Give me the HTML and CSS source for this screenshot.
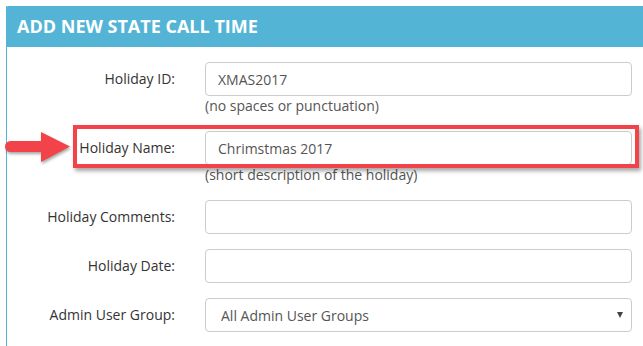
FILE: index.html
```html
<!DOCTYPE html>
<html>
<head>
  <meta charset="UTF-8">
  <title>Add New State Call Time</title>
  <link rel="stylesheet" href="styles.css">
</head>
<body>
  <div class="panel">
    <div class="panel-heading">ADD NEW STATE CALL TIME</div>
    <div class="panel-body">
      <div class="form-row">
        <label class="form-label">Holiday ID:</label>
        <div class="form-field">
          <input class="form-input" type="text" value="XMAS2017">
          <span class="help">(no spaces or punctuation)</span>
        </div>
      </div>
      <div class="form-row">
        <label class="form-label">Holiday Name:</label>
        <div class="form-field">
          <input class="form-input" type="text" value="Chrimstmas 2017">
          <span class="help">(short description of the holiday)</span>
        </div>
      </div>
      <div class="form-row">
        <label class="form-label">Holiday Comments:</label>
        <div class="form-field">
          <input class="form-input" type="text">
        </div>
      </div>
      <div class="form-row">
        <label class="form-label">Holiday Date:</label>
        <div class="form-field">
          <input class="form-input" type="text">
        </div>
      </div>
      <div class="form-row">
        <label class="form-label">Admin User Group:</label>
        <div class="form-field">
          <span class="select-wrap">
            <select class="form-input form-select">
              <option>All Admin User Groups</option>
            </select>
          </span>
        </div>
      </div>
    </div>
  </div>

  <!-- annotation drawn over the form -->
  <div class="callout"></div>
  <svg class="arrow" width="76" height="46" viewBox="0 0 76 46">
    <path d="M10.5 16 H41 V7 L70 21.5 L41 37 V27 H10.5 A5.5 5.5 0 0 1 10.5 16 Z" fill="#f2434a"/>
  </svg>
</body>
</html>
```

FILE: styles.css
```css
body {
  font-family: 'Open Sans', 'Liberation Sans', sans-serif;
  font-size: 14px;
  margin: 0;
  padding: 6px 0 0 6px;
  position: relative;
  background: #fff;
  color: #333;
  overflow: hidden;
  height: 346px;
  box-sizing: border-box;
}
.panel {
  border-left: 1px solid #53b4d6;
  height: 100%;
}
.panel-heading {
  background: #53b4d6;
  color: #fff;
  font-weight: 700;
  font-size: 18px;
  height: 41px;
  line-height: 41px;
  padding-left: 11px;
  margin-left: -1px;
  border-radius: 3px 0 0 0;
}
.panel-body {
  padding-top: 15px;
}
.form-row {
  display: grid;
  grid-template-columns: 168px 427px;
  column-gap: 30px;
  margin-bottom: 15px;
}
.form-label {
  text-align: right;
  line-height: 34px;
  color: #333;
}
.form-field {
  display: flex;
  flex-direction: column;
}
.form-input {
  box-sizing: border-box;
  height: 34px;
  width: 100%;
  border: 1px solid #ccc;
  border-radius: 4px;
  padding: 0 12px;
  font-family: inherit;
  font-size: 14px;
  color: #555;
  background: #fff;
}
.help {
  line-height: 20px;
  color: #555;
}
.select-wrap {
  position: relative;
  display: block;
}
.form-select {
  appearance: none;
  -webkit-appearance: none;
  padding-left: 15px;
}
.select-wrap::after {
  content: "";
  position: absolute;
  right: 9px;
  top: 14px;
  border-left: 3.5px solid transparent;
  border-right: 3.5px solid transparent;
  border-top: 6px solid #444;
}
.callout {
  position: absolute;
  left: 73px;
  top: 125px;
  width: 566px;
  height: 43px;
  box-sizing: border-box;
  border: 4px solid #f2434a;
  box-shadow: 2px 3px 4px rgba(0, 0, 0, 0.35);
}
.arrow {
  position: absolute;
  left: 0;
  top: 125px;
  filter: drop-shadow(1px 2px 1.5px rgba(0, 0, 0, 0.35));
}
```
